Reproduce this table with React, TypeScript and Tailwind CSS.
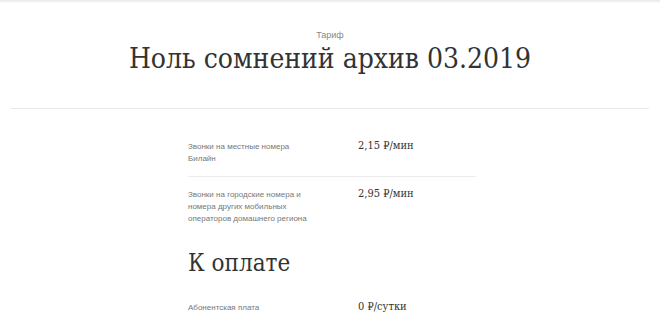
const serif = { fontFamily: '"DejaVu Serif Condensed", "DejaVu Serif", serif', fontStretch: "condensed" };

type Row = { label: string; value: string };

const calls: Row[] = [
  { label: "Звонки на местные номера Билайн", value: "2,15 ₽/мин" },
  { label: "Звонки на городские номера и номера других мобильных операторов домашнего региона", value: "2,95 ₽/мин" },
];

function PriceRow({ row, last }: { row: Row; last?: boolean }) {
  return (
    <div className={`flex pt-[12px] pb-[11px] ${last ? "" : "border-b border-[#ebebeb]"}`}>
      <div className="w-[130px] text-[8px] leading-[12px] text-[#777]">{row.label}</div>
      <div className="ml-[40px] -mt-[2px] text-[11px] leading-[14px] text-[#333]" style={serif}>
        {row.value}
      </div>
    </div>
  );
}

export default function App() {
  return (
    <div className="h-[329px] w-[660px] overflow-hidden bg-white" style={{ fontFamily: '"Liberation Sans", Arial, sans-serif' }}>
      <div className="h-[3px] bg-gradient-to-b from-[#e6e6e6] to-white" />
      <div className="flex flex-col items-center pt-[26px]">
        <div className="text-[9px] leading-[12px] text-[#888]">Тариф</div>
        <h1 className="text-[28px] leading-[36px] text-[#333]" style={serif}>
          Ноль сомнений архив 03.2019
        </h1>
      </div>
      <div className="mx-[11px] mt-[31px] border-t border-[#e8e8e8]" />
      <div className="ml-[188px] w-[288px] pt-[20px]">
        {calls.map((r, i) => (
          <PriceRow key={i} row={r} last={i === calls.length - 1} />
        ))}
        <h2 className="mt-[12px] text-[24px] leading-[30px] text-[#333]" style={serif}>
          К оплате
        </h2>
        <div className="flex pt-[24px]">
          <div className="w-[130px] text-[8px] leading-[12px] text-[#777]">Абонентская плата</div>
          <div className="ml-[40px] -mt-[2px] text-[11px] leading-[14px] text-[#333]" style={serif}>
            0 ₽/сутки
          </div>
        </div>
      </div>
    </div>
  );
}
